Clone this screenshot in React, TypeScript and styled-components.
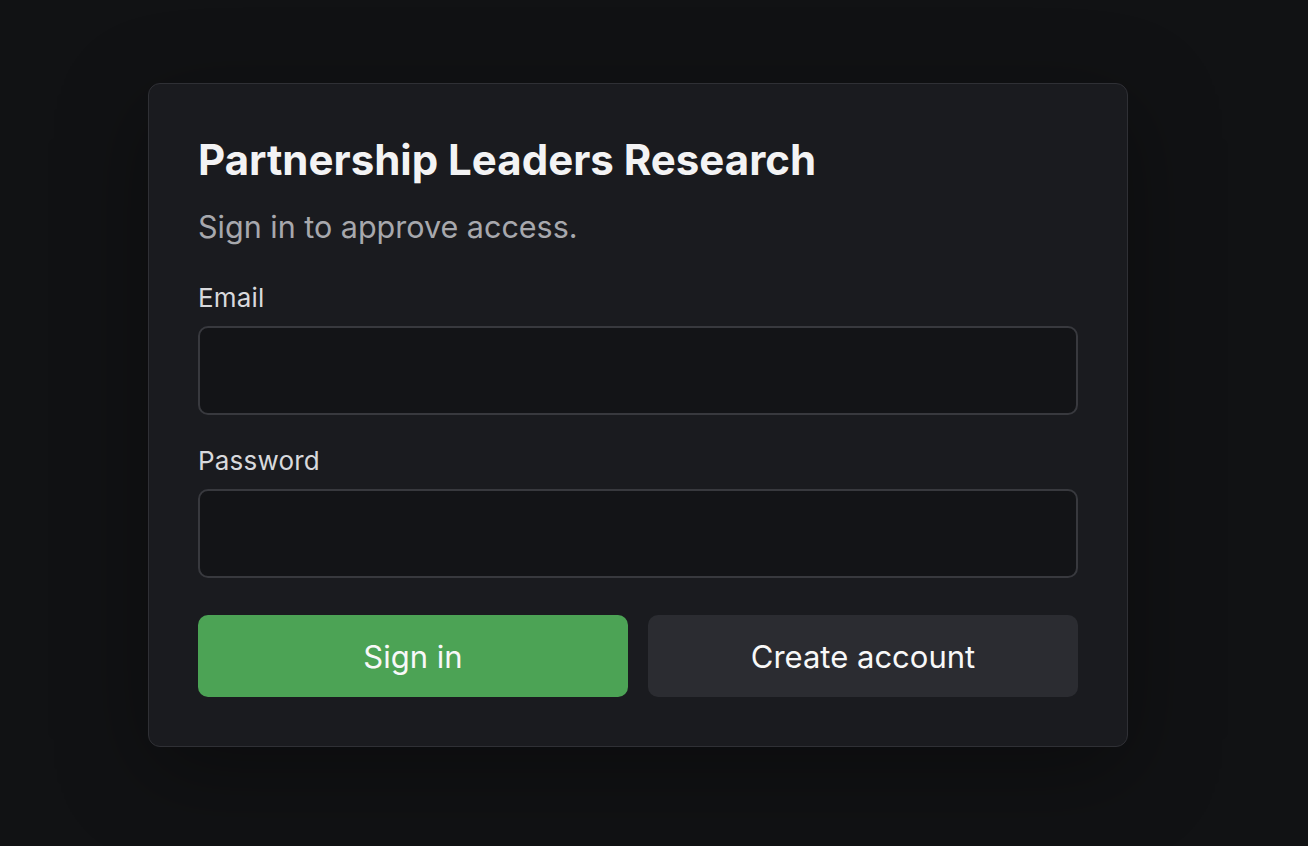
import styled, { createGlobalStyle } from "styled-components";

const GlobalStyle = createGlobalStyle`
  * {
    box-sizing: border-box;
  }
  body {
    margin: 0;
    background: #111214;
    font-family: Inter, "Noto Sans", "Liberation Sans", sans-serif;
  }
`;

const Page = styled.main`
  min-height: 100vh;
  display: flex;
  align-items: center;
  justify-content: center;
  padding: 0 32px 16px 0;
`;

const Card = styled.form`
  width: 980px;
  background: #1a1b1f;
  border: 1px solid #2f3035;
  border-radius: 12px;
  padding: 51px 49px 49px;
  display: flex;
  flex-direction: column;
  box-shadow: 0 24px 90px rgba(0, 0, 0, 0.35);
`;

const Title = styled.h1`
  margin: 0;
  font-size: 42px;
  line-height: 50px;
  font-weight: 700;
  letter-spacing: 0;
  color: #f3f3f4;
`;

const Subtitle = styled.p`
  margin: 22px 0 0;
  font-size: 30.5px;
  line-height: 39px;
  color: #a7a8ad;
`;

const Fields = styled.div`
  display: flex;
  flex-direction: column;
  gap: 30px;
  margin-top: 36px;
`;

const Field = styled.label`
  display: flex;
  flex-direction: column;
  gap: 13px;
`;

const LabelText = styled.span`
  font-size: 26px;
  line-height: 31px;
  letter-spacing: 0.2px;
  color: #d8d9dc;
`;

const Input = styled.input`
  height: 89px;
  width: 100%;
  background: #131417;
  border: 2px solid #38393e;
  border-radius: 10px;
  padding: 0 20px;
  font: inherit;
  font-size: 26px;
  color: #f3f3f4;
  outline: none;
`;

const Actions = styled.div`
  display: grid;
  grid-template-columns: 1fr 1fr;
  gap: 20px;
  margin-top: 37px;
`;

const Button = styled.button<{ $primary?: boolean }>`
  height: 82px;
  border: none;
  border-radius: 10px;
  font-family: inherit;
  font-size: 31px;
  font-weight: 400;
  color: #f8f8f8;
  background: ${(p) => (p.$primary ? "#4ca355" : "#2b2c31")};
  cursor: pointer;
`;

export default function App() {
  return (
    <>
      <GlobalStyle />
      <Page>
        <Card onSubmit={(e) => e.preventDefault()}>
          <Title>Partnership Leaders Research</Title>
          <Subtitle>Sign in to approve access.</Subtitle>
          <Fields>
            <Field>
              <LabelText>Email</LabelText>
              <Input type="email" />
            </Field>
            <Field>
              <LabelText>Password</LabelText>
              <Input type="password" />
            </Field>
          </Fields>
          <Actions>
            <Button type="submit" $primary>
              Sign in
            </Button>
            <Button type="button">Create account</Button>
          </Actions>
        </Card>
      </Page>
    </>
  );
}
